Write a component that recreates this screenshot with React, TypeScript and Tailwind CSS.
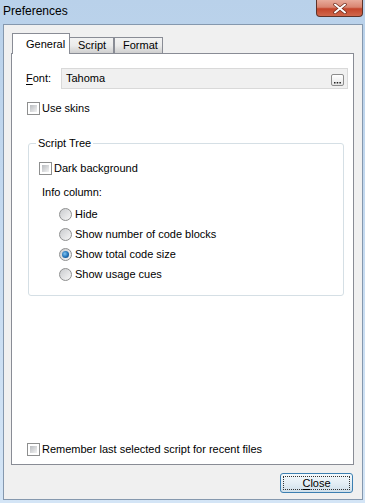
import React from "react";

const CheckBox = () => (
  <div className="w-[13px] h-[13px] border border-[#8e8f8f] bg-white p-[2px] shrink-0">
    <div className="w-full h-full bg-gradient-to-br from-[#b9bcc0] to-[#f3f3f3]" />
  </div>
);

const Radio = ({ checked }: { checked?: boolean }) => (
  <div className="w-[13px] h-[13px] rounded-full border border-[#8e8f8f] bg-gradient-to-br from-[#c9cbce] to-[#f8f8f8] flex items-center justify-center shrink-0">
    {checked && (
      <div className="w-[7px] h-[7px] rounded-full bg-[radial-gradient(circle_at_40%_40%,#7fc4f2_0%,#1f6fb5_55%,#0d3f73_100%)]" />
    )}
  </div>
);

const CheckRow = ({ label, className = "" }: { label: string; className?: string }) => (
  <div className={`flex items-center h-[13px] gap-[2px] ${className}`}>
    <CheckBox />
    <span className="leading-[13px]">{label}</span>
  </div>
);

const RadioRow = ({ label, checked }: { label: string; checked?: boolean }) => (
  <div className="flex items-center h-[13px] gap-[3px]">
    <Radio checked={checked} />
    <span className="leading-[13px]">{label}</span>
  </div>
);

const App: React.FC = () => {
  return (
    <div className="w-[365px] h-[503px] flex flex-col bg-gradient-to-b from-[#b9d1ea] via-[#c6dbf1] to-[#d4e5f6] font-['Liberation_Sans',Arial,sans-serif] text-[11px] text-black overflow-hidden">
      {/* title bar */}
      <div className="h-[24px] flex items-start justify-between shrink-0">
        <div className="h-[21px] flex items-center pl-[3px] text-[12px]">Preferences</div>
        <div className="mr-[2px] w-[47px] h-[17px] rounded-b-[4px] border border-t-0 border-[#5e3228] bg-[linear-gradient(#e8ab9b_0%,#d98571_45%,#c4452b_55%,#d0684c_100%)] flex items-center justify-center">
          <svg width="14" height="11" viewBox="0 0 14 11">
            <path d="M2 1.5 L12 9.5 M12 1.5 L2 9.5" stroke="#6d2a1c" strokeWidth="3.4" strokeLinecap="round" />
            <path d="M2 1.5 L12 9.5 M12 1.5 L2 9.5" stroke="#ffffff" strokeWidth="2" strokeLinecap="round" />
          </svg>
        </div>
      </div>

      {/* client area */}
      <div className="ml-[3px] mr-[2px] h-[476px] border border-[#8598ae] bg-[#f0f0f0] flex flex-col shrink-0">
        <div className="ml-[7px] mt-[8px] w-[343px]">
          {/* tabs */}
          <div className="flex items-end h-[20px] pl-px">
            <div className="relative z-10 w-[58px] h-[21px] -mb-px border border-b-0 border-[#898c95] bg-white pl-[13px] pt-[4px] leading-[13px]">
              General
            </div>
            <div className="w-[44px] h-[16px] border border-l-0 border-b-0 border-[#898c95] bg-gradient-to-b from-[#f2f2f2] via-[#ebebeb] to-[#cfcfcf] pl-[8px] pt-px leading-[13px]">
              Script
            </div>
            <div className="w-[49px] h-[16px] border border-b-0 border-[#898c95] bg-gradient-to-b from-[#f2f2f2] via-[#ebebeb] to-[#cfcfcf] pl-[8px] pt-px leading-[13px]">
              Format
            </div>
          </div>

          {/* panel */}
          <div className="h-[412px] border border-[#898c95] bg-white flex flex-col">
            <div className="mt-[14px] flex items-center h-[21px] pl-[14px]">
              <span className="w-[35px]">
                <u className="underline-offset-[2px]">F</u>ont:
              </span>
              <div className="w-[287px] h-[21px] border border-[#d9d9d9] bg-[#f0f0f0] flex items-center justify-between pl-[4px] pr-[3px]">
                <span>Tahoma</span>
                <div className="w-[13px] h-[12px] mt-[2px] rounded-[2px] border border-[#8d8d8d] bg-gradient-to-b from-white to-[#e6e6e6] flex items-end justify-center pb-[1px]">
                  <svg width="7" height="2" viewBox="0 0 7 2">
                    <rect x="0" y="0" width="1.5" height="1.5" fill="#222" />
                    <rect x="2.7" y="0" width="1.5" height="1.5" fill="#222" />
                    <rect x="5.4" y="0" width="1.5" height="1.5" fill="#222" />
                  </svg>
                </div>
              </div>
            </div>

            <CheckRow label="Use skins" className="mt-[13px] pl-[15px]" />

            {/* Script Tree group */}
            <div className="relative mt-[28px] ml-[16px] w-[316px] h-[153px] border border-[#d5dfe5] rounded-[3px] flex flex-col">
              <span className="absolute -top-[7px] left-[7px] bg-white px-[2px] leading-[13px]">Script Tree</span>
              <CheckRow label="Dark background" className="mt-[18px] pl-[10px]" />
              <div className="mt-[11px] pl-[13px] h-[13px] leading-[13px]">Info column:</div>
              <div className="mt-[9px] pl-[30px] flex flex-col gap-[7px]">
                <RadioRow label="Hide" />
                <RadioRow label="Show number of code blocks" />
                <RadioRow label="Show total code size" checked />
                <RadioRow label="Show usage cues" />
              </div>
            </div>

            <CheckRow label="Remember last selected script for recent files" className="mt-auto mb-[8px] pl-[15px]" />
          </div>
        </div>

        {/* footer */}
        <div className="mt-[8px] flex justify-end pr-[9px]">
          <div className="w-[73px] h-[20px] rounded-[3px] border border-[#3c7fb1] bg-gradient-to-b from-[#f4f9fc] via-[#e4eef5] to-[#cfdfea] p-[2px]">
            <div className="w-full h-full border border-dotted border-[#333] flex items-center justify-center leading-[12px]">
              <span>
                <u className="underline-offset-[2px]">C</u>lose
              </span>
            </div>
          </div>
        </div>
      </div>
    </div>
  );
};

export default App;
